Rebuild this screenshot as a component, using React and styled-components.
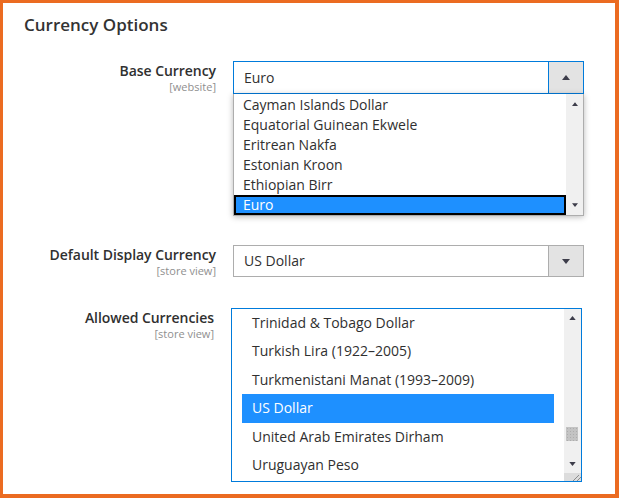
import styled, { createGlobalStyle } from "styled-components";

const Global = createGlobalStyle`
    html, body { margin: 0; padding: 0; background: #fff; }
    body { font-family: "Open Sans", "Liberation Sans", sans-serif; color: #303030; }
`

// orange frame round the whole fieldset
const Panel = styled.div`
    box-sizing: border-box;
    width: 619px;
    height: 498px;
    border-style: solid;
    border-color: #eb6b21;
    border-width: 3px 4px 4px 3px;
    padding: 11px 0 0 21px;
    background: #fff;
    overflow: hidden;
`
const Title = styled.div`
    font-size: 17px;
    font-weight: 600;
    line-height: 22px;
    color: #333;
    margin-bottom: 25px;
`
const Rows = styled.div`
    display: flex;
    flex-direction: column;
    gap: 29px;
`
const Row = styled.div`
    display: grid;
    grid-template-columns: 192px 351px;
    column-gap: 17px;
    align-items: start;
    margin-left: ${p => p.$shift || 0}px;
    margin-top: ${p => p.$top || 0}px;
`
const LabelCol = styled.div`
    display: flex;
    flex-direction: column;
    align-items: flex-end;
    text-align: right;
    padding-top: 1px;
`
const Label = styled.div`
    font-size: 14px;
    font-weight: 600;
    line-height: 18px;
    letter-spacing: -0.05px;
    color: #303030;
    white-space: nowrap;
`
const Scope = styled.div`
    font-size: 11px;
    line-height: 13px;
    color: #8f8f8f;
`
const Control = styled.div`
    display: flex;
    flex-direction: column;
`
// closed select: value + grey button with the arrow
const SelectBox = styled.div`
    box-sizing: border-box;
    height: ${p => p.$h}px;
    display: flex;
    border: 1px solid ${p => (p.$focus ? "#007bdb" : "#adadad")};
    background: #fff;
`
const SelectValue = styled.div`
    flex: 1;
    padding-left: 10px;
    font-size: 14px;
    line-height: ${p => p.$h - 2}px;
    color: #303030;
`
const SelectButton = styled.div`
    width: 34px;
    display: flex;
    align-items: center;
    justify-content: center;
    background: #e3e3e3;
    border-left: 1px solid ${p => (p.$focus ? "#007bdb" : "#adadad")};
`
// open list under the first select
const OptionList = styled.div`
    box-sizing: border-box;
    display: flex;
    border: 1px solid #adadad;
    border-top: none;
    background: #fff;
    box-shadow: 0 1px 6px rgba(0, 0, 0, 0.28);
`
const MultiSelect = styled.div`
    box-sizing: border-box;
    width: 351px;
    height: 174px;
    display: flex;
    border: 1px solid #007bdb;
    background: #fff;
`
const Options = styled.div`
    flex: 1;
    display: flex;
    flex-direction: column;
    padding: ${p => p.$top || 0}px ${p => p.$pad || 0}px 0;
    overflow: hidden;
`
const Option = styled.div`
    height: ${p => p.$h}px;
    line-height: ${p => p.$h}px;
    padding-left: ${p => p.$indent}px;
    font-size: 14px;
    white-space: nowrap;
    color: ${p => (p.$selected ? "#fff" : "#303030")};
    background: ${p => (p.$selected ? "#1e90ff" : "transparent")};
    box-shadow: ${p => (p.$ring ? "inset 0 0 0 2px #000" : "none")};
`
const Scrollbar = styled.div`
    width: 17px;
    display: flex;
    flex-direction: column;
    background-color: #f0f0f0;
    background-image: radial-gradient(#e4e4e4 0.6px, transparent 0.7px);
    background-size: 2px 2px;
`
const ScrollButton = styled.div`
    height: ${p => p.$h}px;
    display: flex;
    align-items: center;
    justify-content: center;
`
const Track = styled.div`
    flex: 1;
    position: relative;
`
const Thumb = styled.div`
    position: absolute;
    left: 2px;
    right: 3px;
    top: ${p => p.$top}px;
    height: 14px;
    background-color: #c3c3c3;
    background-image: radial-gradient(#adadad 0.6px, transparent 0.7px);
    background-size: 3px 3px;
`
const Grip = styled.div`
    height: 8px;
    background: #dcdcdc;
    display: flex;
    justify-content: flex-end;
    align-items: flex-end;
`

function Arrow({ up, w = 8, h = 5 }) {
    return (
        <svg width={w} height={h} viewBox="0 0 8 5">
            {up
                ? <polygon points="0,5 4,0 8,5" fill="#3d3d4a" />
                : <polygon points="0,0 8,0 4,5" fill="#3d3d4a" />}
        </svg>
    );
}

const baseList = [
    "Cayman Islands Dollar",
    "Equatorial Guinean Ekwele",
    "Eritrean Nakfa",
    "Estonian Kroon",
    "Ethiopian Birr",
    "Euro",
];

const allowedList = [
    "Trinidad & Tobago Dollar",
    "Turkish Lira (1922–2005)",
    "Turkmenistani Manat (1993–2009)",
    "US Dollar",
    "United Arab Emirates Dirham",
    "Uruguayan Peso",
];

export default function App() {
    return (
        <>
            <Global />
            <Panel>
                <Title>Currency Options</Title>
                <Rows>
                    {/* Base currency: select is open */}
                    <Row>
                        <LabelCol>
                            <Label>Base Currency</Label>
                            <Scope>[website]</Scope>
                        </LabelCol>
                        <Control>
                            <SelectBox $h={33} $focus>
                                <SelectValue $h={33}>Euro</SelectValue>
                                <SelectButton $focus><Arrow up /></SelectButton>
                            </SelectBox>
                            <OptionList>
                                <Options $top={1}>
                                    {baseList.map(name => (
                                        <Option key={name} $h={20} $indent={9}
                                            $selected={name === "Euro"} $ring={name === "Euro"}>
                                            {name}
                                        </Option>
                                    ))}
                                </Options>
                                <Scrollbar>
                                    <ScrollButton $h={20}><Arrow up w={6} h={4} /></ScrollButton>
                                    <Track />
                                    <ScrollButton $h={20}><Arrow w={6} h={4} /></ScrollButton>
                                </Scrollbar>
                            </OptionList>
                        </Control>
                    </Row>

                    <Row>
                        <LabelCol>
                            <Label>Default Display Currency</Label>
                            <Scope>[store view]</Scope>
                        </LabelCol>
                        <Control>
                            <SelectBox $h={32}>
                                <SelectValue $h={32}>US Dollar</SelectValue>
                                <SelectButton><Arrow /></SelectButton>
                            </SelectBox>
                        </Control>
                    </Row>

                    <Row $shift={-2} $top={2}>
                        <LabelCol>
                            <Label>Allowed Currencies</Label>
                            <Scope>[store view]</Scope>
                        </LabelCol>
                        <Control>
                            <MultiSelect>
                                <Options $pad={10}>
                                    {allowedList.map(name => (
                                        <Option key={name} $h={28.4} $indent={10}
                                            $selected={name === "US Dollar"}>
                                            {name}
                                        </Option>
                                    ))}
                                </Options>
                                <Scrollbar>
                                    <ScrollButton $h={18}><Arrow up w={7} h={4} /></ScrollButton>
                                    <Track><Thumb $top={100} /></Track>
                                    <ScrollButton $h={18}><Arrow w={7} h={4} /></ScrollButton>
                                    <Grip>
                                        <svg width="10" height="8" viewBox="0 0 10 8">
                                            <line x1="2" y1="8" x2="8" y2="2" stroke="#777" strokeWidth="0.8" />
                                            <line x1="6" y1="8" x2="10" y2="4" stroke="#777" strokeWidth="0.8" />
                                        </svg>
                                    </Grip>
                                </Scrollbar>
                            </MultiSelect>
                        </Control>
                    </Row>
                </Rows>
            </Panel>
        </>
    );
}
